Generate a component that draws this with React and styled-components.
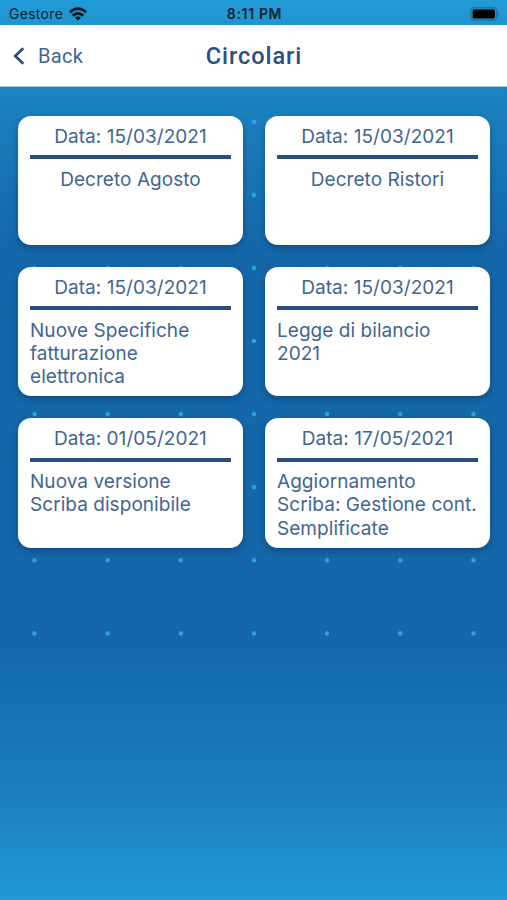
import React from "react";
import styled, { createGlobalStyle } from "styled-components";

const GlobalStyle = createGlobalStyle`
  * { box-sizing: border-box; }
  body { margin: 0; background: #1467a8; }
`;

const Screen = styled.div`
  width: 507px;
  height: 900px;
  overflow: hidden;
  display: flex;
  flex-direction: column;
  font-family: Inter, "Liberation Sans", sans-serif;
  color: #416593;
  background: linear-gradient(180deg, #219bd6 0, #1b83c0 90px, #1467a8 252px, #1467a8 640px, #1b80bd 800px, #2099d4 900px);
`;

const StatusBar = styled.div`
  flex: none;
  height: 25px;
  padding: 2px 7px 0 9px;
  display: grid;
  grid-template-columns: 1fr auto 1fr;
  align-items: center;
  color: #08202f;
  font-size: 13.8px;
  line-height: 20px;
`;

const Carrier = styled.div`
  display: flex;
  align-items: center;
  gap: 6px;
  letter-spacing: 0.4px;
`;

const Clock = styled.div`
  font-weight: 600;
  font-size: 14px;
  letter-spacing: 0.65px;
`;

const BatterySlot = styled.div`
  display: flex;
  justify-content: flex-end;
`;

const NavBar = styled.header`
  flex: none;
  height: 62px;
  padding: 0 13px;
  display: grid;
  grid-template-columns: 1fr auto 1fr;
  align-items: center;
  background: #fff;
  border-bottom: 1px solid #a5d3ec;
`;

const BackButton = styled.button`
  display: flex;
  align-items: center;
  gap: 13px;
  padding: 0;
  border: 0;
  background: none;
  font: 400 20px/24px Roboto, sans-serif;
  letter-spacing: 0.35px;
  color: #416593;
`;

const Title = styled.h1`
  margin: 0 0 0 1px;
  font: 500 23.5px/28px Roboto, sans-serif;
  letter-spacing: 0.95px;
  color: #2a5080;
`;

const DotField = styled.main`
  flex: 1;
  position: relative;
  padding: 29px 17px 0 18px;

  &::before {
    content: "";
    position: absolute;
    left: 0;
    top: 0;
    width: 507px;
    height: 583px;
    background: radial-gradient(circle at center, #29a9dd 1.7px, rgba(41, 169, 221, 0) 2.7px) -2.1px -1.8px / 73.17px 73.1px;
  }
`;

const CardGrid = styled.div`
  position: relative;
  display: grid;
  grid-template-columns: 225px 225px;
  grid-auto-rows: 129.2px;
  column-gap: 22px;
  row-gap: 22px;
`;

const Card = styled.article`
  display: flex;
  flex-direction: column;
  padding: 9px 12px 0;
  border-radius: 13px;
  background: #fff;
  box-shadow: 0 3px 6px rgba(6, 38, 78, 0.42);
  font-size: 19px;
  line-height: 23.2px;
  letter-spacing: 0.05px;
`;

const CardDate = styled.time`
  display: block;
  padding-bottom: 7px;
  text-align: center;
  white-space: nowrap;
  border-bottom: 4px solid #28507f;
`;

const CardTitle = styled.div`
  padding-top: 8.7px;
  align-self: ${({ $centered }) => ($centered ? "center" : "flex-start")};
  white-space: pre;
`;

const WifiIcon = () => (
  <svg width="18" height="14" viewBox="0 0 18 14" fill="none" stroke="#06131b" strokeWidth="2.7">
    <path d="M.9 5.3Q9-2.1 17.1 5.3" />
    <path d="M3.8 8.7Q9 4 14.2 8.7" />
    <path d="M9 13.6L5.9 10.6Q9 8.2 12.1 10.6Z" fill="#06131b" stroke="none" />
  </svg>
);

const BatteryIcon = () => (
  <svg width="30" height="14" viewBox="0 0 30 14">
    <rect x="0.9" y="0.9" width="25.8" height="12.2" rx="3.5" fill="none" stroke="#15719c" strokeWidth="1.3" />
    <rect x="2.6" y="2.5" width="22.3" height="9" rx="1.5" fill="#000" />
    <path d="M27.7 5v4q1.6-.6 1.6-2t-1.6-2Z" fill="#15719c" />
  </svg>
);

const ChevronIcon = () => (
  <svg width="12" height="18" viewBox="0 0 12 18" fill="none" stroke="#2a5080" strokeWidth="2.8">
    <path d="M10.3 1.3L2.3 9l8 7.7" />
  </svg>
);

const circulars = [
  { date: "15/03/2021", title: "Decreto Agosto", centered: true },
  { date: "15/03/2021", title: "Decreto Ristori", centered: true },
  { date: "15/03/2021", title: "Nuove Specifiche\nfatturazione\nelettronica" },
  { date: "15/03/2021", title: "Legge di bilancio\n2021" },
  { date: "01/05/2021", title: "Nuova versione\nScriba disponibile" },
  { date: "17/05/2021", title: "Aggiornamento\nScriba: Gestione cont.\nSemplificate" },
];

export default function App() {
  return (
    <Screen>
      <GlobalStyle />
      <StatusBar>
        <Carrier>
          Gestore
          <WifiIcon />
        </Carrier>
        <Clock>8:11 PM</Clock>
        <BatterySlot>
          <BatteryIcon />
        </BatterySlot>
      </StatusBar>
      <NavBar>
        <BackButton>
          <ChevronIcon />
          Back
        </BackButton>
        <Title>Circolari</Title>
      </NavBar>
      <DotField>
        <CardGrid>
          {circulars.map(({ date, title, centered }) => (
            <Card key={title}>
              <CardDate>Data: {date}</CardDate>
              <CardTitle $centered={centered}>{title}</CardTitle>
            </Card>
          ))}
        </CardGrid>
      </DotField>
    </Screen>
  );
}
